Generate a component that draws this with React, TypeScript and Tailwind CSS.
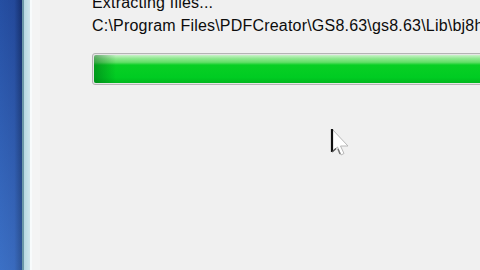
export default function App() {
  return (
    <div className="relative flex h-[270px] w-[480px] overflow-hidden bg-[#f0f0f0] font-['Liberation_Sans',Arial,sans-serif]">
      {/* desktop / window frame on the left */}
      <div className="h-full w-[22px] shrink-0 bg-[linear-gradient(to_right,#2b5cb4_0%,#2853a8_65%,#15306a_100%)]">
        <div className="h-full w-full bg-[linear-gradient(to_bottom,rgba(20,40,110,0.25),rgba(90,150,230,0.35))]" />
      </div>
      <div className="flex h-full w-[10px] shrink-0">
        <div className="h-full w-[2px] bg-[#6c98a8]" />
        <div className="h-full w-[6px] bg-[linear-gradient(to_right,#b7d8e2,#cfe6ec)]" />
        <div className="h-full w-[2px] bg-[#f8fbfc]" />
      </div>
      <div className="h-full w-[8px] shrink-0 bg-[#f4f4f4]" />

      {/* dialog body */}
      <div className="flex flex-1 flex-col pl-[52px] text-[16px] tracking-[0.2px] text-[#0c0c0c]">
        <div className="-mt-[9px] h-[23px] whitespace-nowrap leading-[23px]">Extracting files...</div>
        <div className="h-[23px] whitespace-nowrap leading-[23px]">
          C:\Program Files\PDFCreator\GS8.63\gs8.63\Lib\bj8h.upp
        </div>
        <div className="mt-[16px] h-[32px] w-[420px] rounded-[3px] border border-[#b4b4b4] bg-[#e6e6e6] p-[1px]">
          <div className="relative h-full w-full overflow-hidden rounded-[2px] bg-[linear-gradient(to_bottom,#c9f2c9_0%,#8fe890_12%,#62df68_26%,#08cf24_36%,#00cc22_80%,#00b81e_100%)]">
            <div className="absolute inset-y-0 left-0 w-[22px] bg-[linear-gradient(to_right,rgba(0,90,20,0.45),rgba(0,90,20,0))]" />
          </div>
        </div>
      </div>

      {/* mouse pointer */}
      <svg
        className="absolute left-[330px] top-[128px]"
        width="20"
        height="30"
        viewBox="0 0 20 30"
      >
        <path
          d="M2 1 L2 24 L7.5 19 L11 27 L14 25.5 L10.5 18 L18 18 Z"
          fill="#ffffff"
          stroke="#b8b8b8"
          strokeWidth="1"
          strokeLinejoin="round"
        />
        <path d="M2 1 L2 24" stroke="#111111" strokeWidth="2.2" />
        <path d="M2 24 L6 20.5" stroke="#555555" strokeWidth="1.4" />
        <path d="M8 21 L10 26" stroke="#777777" strokeWidth="1.4" />
      </svg>
    </div>
  );
}
